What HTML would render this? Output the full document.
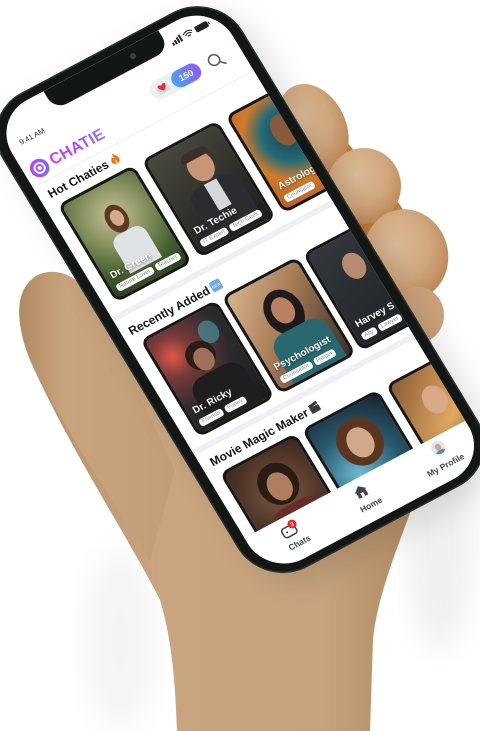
<!DOCTYPE html>
<html><head><meta charset="utf-8"><style>
*{margin:0;padding:0;box-sizing:border-box}
html,body{width:480px;height:731px;overflow:hidden;background:#fff;font-family:"Liberation Sans",sans-serif}
#hand{position:absolute;left:0;top:0}
#ph{position:absolute;left:0;top:0;transform-origin:0 0;transform:matrix(0.883,-0.469,0.5176,0.857,0,0)}
.outer{position:absolute;left:-80px;top:92px;width:272px;height:553px;border-radius:50px;background:#121615;box-shadow:0 0 0 1.5px #2a302e inset, 8px 14px 30px rgba(0,0,0,.12)}
.scr{position:absolute;left:-69px;top:101px;width:250px;height:535px;border-radius:40px;background:#fff;overflow:hidden}
.a{position:absolute}
.card{position:absolute;width:86px;height:114px;border-radius:9px;border:3px solid #161616;overflow:hidden}
.nm{position:absolute;left:6px;bottom:17px;color:#fff;font-weight:bold;font-size:10px;white-space:nowrap;text-shadow:0 1px 2px rgba(0,0,0,.5)}
.tg{position:absolute;left:5px;bottom:5px;white-space:nowrap;font-size:0}
.tg span{display:inline-block;background:#fff;color:#8a8f99;font-size:6px;padding:1px 3px;border-radius:3px;margin-right:3px}
.h{position:absolute;font-weight:bold;font-size:12px;color:#141414;white-space:nowrap}
.band{position:absolute;left:0;width:250px;height:6px;background:#eef0f5}
.face{position:absolute;border-radius:50%}
.lab{position:absolute;font-size:8.5px;color:#3f4250;font-weight:bold;white-space:nowrap}
</style></head><body>
<svg id="hand" width="480" height="731" viewBox="0 0 480 731">
<defs>
<linearGradient id="wr" x1="0" x2="1" y1="0" y2="0"><stop offset="0" stop-color="#b48e66"/><stop offset=".35" stop-color="#c9a57f"/><stop offset=".75" stop-color="#c6a37d"/><stop offset="1" stop-color="#ad875e"/></linearGradient>
<radialGradient id="fg" cx=".4" cy=".35" r=".7"><stop offset="0" stop-color="#dcbb98"/><stop offset=".6" stop-color="#d0a77e"/><stop offset="1" stop-color="#bd8655"/></radialGradient>
<linearGradient id="th" x1="0" x2="1" y1="0" y2="0"><stop offset="0" stop-color="#b08a62"/><stop offset=".3" stop-color="#c8a47e"/><stop offset="1" stop-color="#c29e78"/></linearGradient>
<filter id="bl"><feGaussianBlur stdDeviation="14"/></filter>
</defs>
<ellipse cx="440" cy="540" rx="35" ry="110" fill="#000" opacity=".06" filter="url(#bl)"/>
<ellipse cx="120" cy="640" rx="40" ry="90" fill="#000" opacity=".04" filter="url(#bl)"/>
<path d="M177 731 C175 680 172 640 160 600 C130 540 70 450 30 360 C15 322 14 288 38 275 C58 266 78 278 90 295 L200 200 L300 90 L395 290 L425 470 C410 520 378 585 373 640 L370 731 Z" fill="url(#wr)"/>
<path d="M38 275 C58 266 78 278 90 295 L175 470 L150 560 C120 510 70 440 30 360 C15 322 14 288 38 275 Z" fill="url(#th)"/>
<path d="M270 110 L345 140 L400 205 L440 270 L420 330 L300 200 Z" fill="#c47634"/>
<ellipse cx="313" cy="128" rx="33" ry="46" transform="rotate(-25 313 128)" fill="url(#fg)"/>
<ellipse cx="364" cy="186" rx="37" ry="38" fill="url(#fg)"/>
<ellipse cx="406" cy="255" rx="42" ry="46" transform="rotate(-15 406 255)" fill="url(#fg)"/>
<ellipse cx="418" cy="315" rx="26" ry="28" fill="#cca27b"/>
</svg>

<div id="ph">
<div class="outer"></div>
<div class="scr">
  <div class="a" style="left:59px;top:0;width:130px;height:22px;background:#121615;border-radius:0 0 14px 14px"></div>
  <div class="a" style="left:151px;top:8px;width:6px;height:6px;border-radius:50%;background:#3a3f44"></div>
  <div class="a" style="left:12px;top:30px;font-size:7.5px;color:#222">9:41 AM</div>
  <svg class="a" style="left:194px;top:12px" width="44" height="10" viewBox="0 0 44 10">
    <rect x="0" y="6" width="2" height="3" fill="#222"/><rect x="3" y="4.5" width="2" height="4.5" fill="#222"/><rect x="6" y="3" width="2" height="6" fill="#222"/><rect x="9" y="1.5" width="2" height="7.5" fill="#222"/>
    <path d="M14 4 Q19 0 24 4 M15.5 5.8 Q19 3 22.5 5.8 M17.3 7.5 Q19 6.3 20.7 7.5" stroke="#222" stroke-width="1.1" fill="none"/>
    <rect x="27" y="2" width="14" height="6.5" rx="1.8" fill="#222"/><rect x="41.5" y="4" width="1.2" height="2.5" fill="#222"/>
  </svg>
  <div class="a" style="left:150px;top:43px;width:56px;height:20px;border-radius:10px;background:#eef0f4"></div>
  <svg class="a" style="left:156px;top:47px" width="14" height="12" viewBox="0 0 14 12"><rect x="1" y="3" width="12" height="8" rx="1" fill="#d9d9de"/><path d="M7 9 C2 5.5 2 2 4.5 2 C6 2 7 3.5 7 3.5 C7 3.5 8 2 9.5 2 C12 2 12 5.5 7 9Z" fill="#e0303f"/></svg>
  <div class="a" style="left:174px;top:44px;width:31px;height:18px;border-radius:9px;background:linear-gradient(90deg,#45a6f5,#8d5cf5);color:#fff;font-size:9px;font-weight:bold;text-align:center;line-height:18px">150</div>
  <svg class="a" style="left:214px;top:45px" width="18" height="18" viewBox="0 0 18 18"><circle cx="7.5" cy="7.5" r="5.5" stroke="#555a66" stroke-width="1.5" fill="none"/><path d="M11.5 11.5 L16 16" stroke="#555a66" stroke-width="1.6" stroke-linecap="round"/></svg>
  <svg class="a" style="left:6px;top:56px" width="20" height="20" viewBox="0 0 20 20"><defs><linearGradient id="lg" x1="0" y1="0" x2="1" y2="1"><stop offset="0" stop-color="#d23cf0"/><stop offset="1" stop-color="#6a6bff"/></linearGradient></defs><circle cx="10" cy="10" r="9.5" fill="url(#lg)"/><circle cx="10" cy="10" r="5" fill="none" stroke="#fff" stroke-width="2"/><circle cx="10" cy="10" r="2" fill="#fff"/></svg>
  <div class="a" style="left:29px;top:57px;font-size:16px;font-weight:900;letter-spacing:.3px;background:linear-gradient(90deg,#d83aef,#a24cff,#8a7cff);-webkit-background-clip:text;background-clip:text;color:transparent">CHATIE</div>
  <div class="a" style="left:0;top:80px;width:250px;height:1px;background:#efeff3"></div>
  <div class="h" style="left:10px;top:87px">Hot Chaties</div>
  <svg class="a" style="left:80px;top:87px" width="10" height="13" viewBox="0 0 10 13"><path d="M5 0 C7 3 10 5 9 9 C8 12 2 12 1 9 C0 6 3 5 3 3 C4 4 4 5 5 5 C5 3 5 1 5 0Z" fill="#f26b1d"/><path d="M5 6 C6.5 8 7 10 5 11.5 C3 10.5 3.5 8 5 6Z" fill="#ffc23a"/></svg>
  <div class="card" style="left:12px;top:107px;background:radial-gradient(circle at 50% 30%,#c9c29a 0,#8a9461 35%,#3f5a2c 75%,#2b3a1f 100%)">
    <div class="face" style="left:30px;top:22px;width:22px;height:30px;background:#5a3a24"></div>
    <div class="face" style="left:35px;top:28px;width:13px;height:17px;background:#d8aa8a"></div>
    <div class="a" style="left:24px;top:52px;width:36px;height:40px;border-radius:10px 10px 0 0;background:#dfe3e8"></div>
    <div class="nm">Dr. Green</div><div class="tg"><span>Nature Lover</span><span>Teacher</span></div></div>
  <div class="card" style="left:107px;top:107px;background:linear-gradient(160deg,#4b4a3e,#2c2d29 60%,#1d1e1c)">
    <div class="face" style="left:32px;top:14px;width:26px;height:32px;background:#c79676"></div>
    <div class="a" style="left:30px;top:12px;width:30px;height:9px;border-radius:10px 10px 2px 2px;background:#3a3029"></div>
    <div class="a" style="left:18px;top:48px;width:54px;height:50px;border-radius:14px 14px 0 0;background:#2a2c2f"></div>
    <div class="a" style="left:38px;top:48px;width:14px;height:30px;background:#d5d7da"></div>
    <div class="nm">Dr. Techie</div><div class="tg"><span>IT Expert</span><span>Tech Geek</span></div></div>
  <div class="card" style="left:202px;top:107px;background:radial-gradient(circle at 55% 40%,#2a3a40 0,#1f6a78 35%,#d27a2a 60%,#b85e1f 100%)">
    <div class="face" style="left:28px;top:20px;width:24px;height:34px;background:#8a5a3e"></div>
    <div class="nm">Astrologer</div><div class="tg"><span>Counselor</span></div></div>
  <div class="band" style="top:231px"></div>
  <div class="h" style="left:8px;top:246px">Recently Added</div>
  <div class="a" style="left:101px;top:247px;width:11px;height:11px;border-radius:2px;background:#6aa8e8;color:#fff;font-size:4px;line-height:11px;text-align:center">NEW</div>
  <div class="card" style="left:13px;top:265px;background:radial-gradient(circle at 20% 25%,#e2574a 0,#7a3a3a 20%,#2b2a2e 55%,#1a1a1d 100%)">
    <div class="a" style="left:50px;top:10px;width:20px;height:24px;border-radius:50%;background:#4aa0a8;opacity:.6"></div>
    <div class="face" style="left:26px;top:24px;width:30px;height:30px;background:#2a1c16"></div>
    <div class="face" style="left:32px;top:32px;width:20px;height:24px;background:#a0705a"></div>
    <div class="a" style="left:14px;top:58px;width:58px;height:50px;border-radius:16px 16px 0 0;background:#1f1d1e"></div>
    <div class="nm">Dr. Ricky</div><div class="tg"><span>Friends</span><span>Funny</span></div></div>
  <div class="card" style="left:105px;top:265px;background:linear-gradient(135deg,#d8b48e,#a57a55 45%,#3a2d2a)">
    <div class="face" style="left:24px;top:16px;width:38px;height:48px;background:#1e1a1c"></div>
    <div class="face" style="left:32px;top:24px;width:22px;height:28px;background:#b88262"></div>
    <div class="a" style="left:14px;top:58px;width:60px;height:50px;border-radius:16px 16px 0 0;background:#2a6870"></div>
    <div class="nm">Psychologist</div><div class="tg"><span>Counsellor</span><span>Helper</span></div></div>
  <div class="card" style="left:197px;top:265px;background:linear-gradient(160deg,#34383c,#1e2226)">
    <div class="face" style="left:24px;top:18px;width:22px;height:28px;background:#b58c70"></div>
    <div class="nm">Harvey S</div><div class="tg"><span>Ally</span><span>Lawyer</span></div></div>
  <div class="band" style="top:387px"></div>
  <div class="h" style="left:10px;top:400px">Movie Magic Maker</div>
  <svg class="a" style="left:122px;top:401px" width="11" height="11" viewBox="0 0 11 11"><rect x="0.5" y="4" width="10" height="6.5" rx="1" fill="#3a3a3a"/><path d="M0.5 1.5 L10 0 L10.5 3 L1 4.5Z" fill="#3a3a3a"/></svg>
  <div class="card" style="left:12px;top:420px;background:radial-gradient(circle at 50% 40%,#7a5a44,#4a3024 60%,#2a1a14)">
    <div class="face" style="left:22px;top:12px;width:40px;height:44px;background:#2a1c14"></div>
    <div class="face" style="left:30px;top:22px;width:24px;height:30px;background:#b07e5e"></div>
    <div class="a" style="left:18px;top:58px;width:52px;height:40px;border-radius:14px 14px 0 0;background:#6a2e28"></div></div>
  <div class="card" style="left:105px;top:420px;background:radial-gradient(circle at 30% 60%,#6fc0d8,#2a5a70 50%,#15252e)">
    <div class="face" style="left:18px;top:10px;width:46px;height:50px;background:#5a3620"></div>
    <div class="face" style="left:28px;top:20px;width:26px;height:32px;background:#d3a88a"></div></div>
  <div class="card" style="left:200px;top:420px;background:linear-gradient(135deg,#8a5a34,#e0a860 50%,#6a4a30)">
    <div class="face" style="left:20px;top:18px;width:24px;height:30px;background:#d8a888"></div></div>
  <div class="a" style="left:0;top:489px;width:250px;height:50px;background:#fff;box-shadow:0 -3px 8px rgba(0,0,0,.06)"></div>
  <svg class="a" style="left:33px;top:494px" width="22" height="18" viewBox="0 0 22 18"><rect x="2" y="5" width="14" height="10" rx="3" fill="none" stroke="#3f4250" stroke-width="1.5"/><circle cx="6.5" cy="10" r="1" fill="#3f4250"/><circle cx="15" cy="5" r="4.5" fill="#e0282f"/><text x="15" y="7.2" font-size="6" fill="#fff" text-anchor="middle" font-family="Liberation Sans" font-weight="bold">3</text></svg>
  <div class="lab" style="left:33px;top:514px">Chats</div>
  <svg class="a" style="left:117px;top:496px" width="14" height="13" viewBox="0 0 14 13"><path d="M7 0.5 L13.5 6 L12 6 L12 12.5 L2 12.5 L2 6 L0.5 6Z" fill="#3f4250"/><rect x="5.5" y="8" width="3" height="4.5" fill="#fff"/></svg>
  <div class="lab" style="left:114px;top:514px">Home</div>
  <div class="a" style="left:206px;top:493px;width:14px;height:14px;border-radius:50%;background:#dfe8f2;overflow:hidden"><div class="face" style="left:4px;top:3px;width:6px;height:7px;background:#d4a586"></div><div class="a" style="left:2px;top:10px;width:10px;height:6px;border-radius:5px;background:#5a8ac0"></div></div>
  <div class="lab" style="left:190px;top:514px">My Profile</div>
</div>
</div>
</body></html>
